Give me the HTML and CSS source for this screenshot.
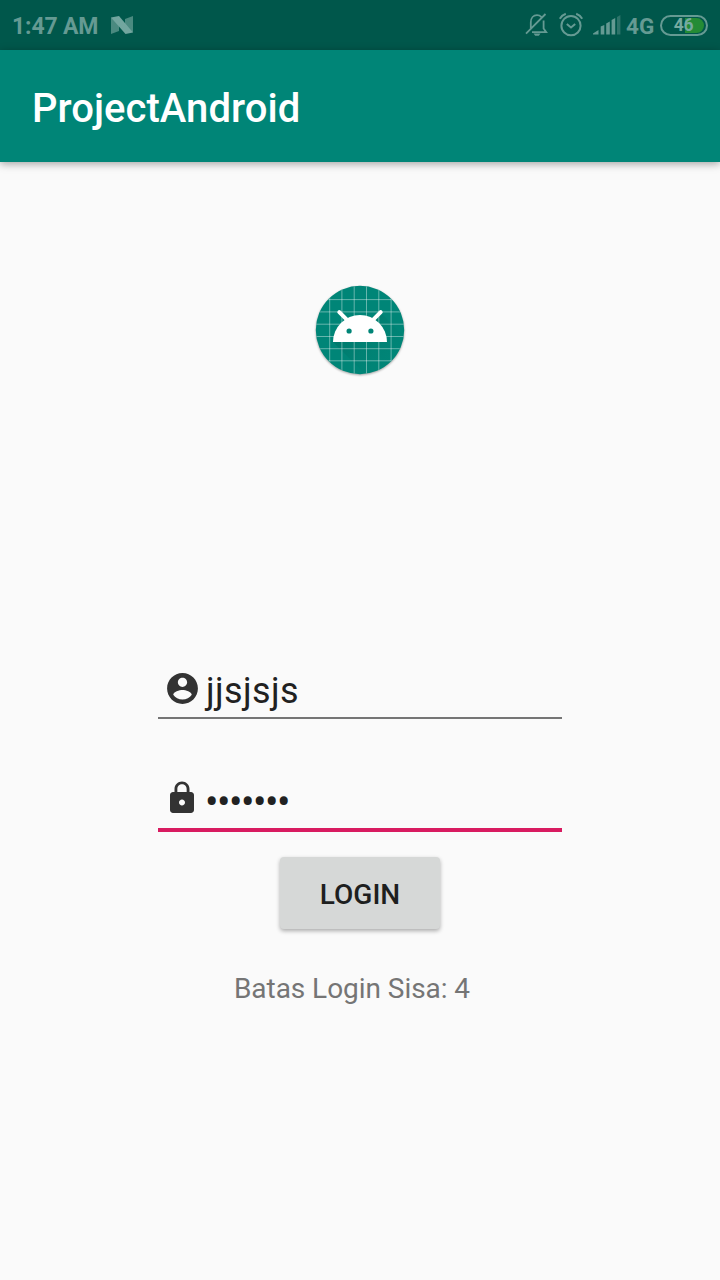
FILE: index.html
```html
<!DOCTYPE html>
<html lang="id">
<head>
<meta charset="utf-8">
<title>ProjectAndroid</title>
<link rel="stylesheet" href="styles.css">
</head>
<body>
<div class="status-bar">
  <span class="clock">1:47 AM</span>
  <svg class="nougat" width="24" height="20" viewBox="0 0 24 20">
    <path d="M1 2.500L9 7v9L1 19zM23 1v16.500l-8-4.500V4z" fill="#4a8a80"/>
    <path d="M1 2.500L9 1 23 17.500 15.500 19z" fill="#72a69f"/>
  </svg>
  <div class="indicators">
    <svg class="bell" width="24" height="26" viewBox="0 0 24 26" fill="none" stroke="#659a93" stroke-width="1.8">
      <path d="M5.800 16V10.500C5.800 6 8.500 3.200 12 3.200c1.700 0 3.200.6 4.300 1.700M18.600 8.500V16.500l2.600 3.600H7M1 21.600L20.500 2"/>
      <path d="M8.500 21.500h7l-1.700 2.300h-3.600z" fill="#659a93" stroke="none"/>
    </svg>
    <svg class="alarm" width="26" height="26" viewBox="0 0 26 26" fill="none" stroke="#659a93" stroke-width="2">
      <circle cx="13" cy="13.700" r="9.600"/>
      <path d="M8.800 12l4.200 3.500 4.200-3.500M1.800 6.800C3.200 4.500 5 2.800 7.800 1.800M24.200 6.800C22.800 4.500 21 2.800 18.200 1.800"/>
    </svg>
    <svg class="signal" width="28" height="22" viewBox="0 0 28 22" fill="#659a93">
      <path d="M0 20.500v-1l5.500-3.500v4.500zM7.700 12.500l3.600-1.500v9.500H7.700zM13.200 9.500l3.600-2v13h-3.600zM18.600 6l3.600-2v16.500h-3.600z"/>
      <path d="M24 3l3.400-2v19.500H24z" fill="#2d746a"/>
    </svg>
    <span class="network">4G</span>
    <div class="battery"><span class="charge"></span><span class="level">46</span></div>
  </div>
</div>
<header class="app-bar"><h1 class="title">ProjectAndroid</h1></header>
<main class="content">
  <svg class="logo" width="96" height="100" viewBox="312 282 96 100">
    <defs>
      <clipPath id="disc"><circle cx="360" cy="330" r="44"/></clipPath>
      <linearGradient id="fade" x1="340" y1="340" x2="380" y2="374" gradientUnits="userSpaceOnUse">
        <stop offset="0" stop-color="#00695c" stop-opacity=".38"/>
        <stop offset="1" stop-color="#00796b" stop-opacity="0"/>
      </linearGradient>
    </defs>
    <circle class="disc" cx="360" cy="330" r="44.200"/>
    <g clip-path="url(#disc)">
      <path d="M333 342l33 33h40v-37l-26-26z" fill="url(#fade)"/>
      <path class="grid" d="M329.700 284v92M341.900 284v92M354.200 284v92M366.500 284v92M378.800 284v92M391.100 284v92M314 299.600h92M314 311.900h92M314 324.200h92M314 336.500h92M314 348.700h92M314 360.800h92"/>
    </g>
    <path d="M333 342a27 27 0 0 1 54 0z" fill="#fff"/>
    <path d="M339.300 312.200l8 8M380.700 312.200l-8 8" stroke="#fff" stroke-width="4" stroke-linecap="round"/>
    <circle cx="349.100" cy="331" r="2.600" fill="#008577"/>
    <circle cx="370.900" cy="331" r="2.600" fill="#008577"/>
  </svg>
  <form class="login">
    <div class="field">
      <svg class="field-icon" width="37" height="37" viewBox="0 0 24 24"><path d="M12 2C6.480 2 2 6.480 2 12s4.480 10 10 10 10-4.480 10-10S17.520 2 12 2zm0 3c1.660 0 3 1.340 3 3s-1.340 3-3 3-3-1.340-3-3 1.340-3 3-3zm0 14.200c-2.500 0-4.710-1.280-6-3.220.03-1.990 4-3.080 6-3.080 1.990 0 5.970 1.090 6 3.080-1.290 1.940-3.500 3.220-6 3.220z"/></svg>
      <span class="value">jjsjsjs</span>
    </div>
    <div class="field focused">
      <svg class="field-icon" width="36" height="36" viewBox="0 0 24 24"><path d="M18 8h-1V6c0-2.760-2.240-5-5-5S7 3.240 7 6v2H6c-1.100 0-2 .9-2 2v10c0 1.100.9 2 2 2h12c1.100 0 2-.9 2-2V10c0-1.100-.9-2-2-2zm-6 9c-1.100 0-2-.9-2-2s.9-2 2-2 2 .9 2 2-.9 2-2 2zm3.100-9H8.900V6c0-1.710 1.390-3.100 3.100-3.100s3.100 1.390 3.100 3.100v2z"/></svg>
      <span class="value password">•••••••</span>
    </div>
    <button class="submit" type="button">LOGIN</button>
  </form>
  <p class="attempts">Batas Login Sisa: 4</p>
</main>
</body>
</html>
```
FILE: styles.css
```css
* { box-sizing: border-box; }
body {
  margin: 0;
  width: 720px;
  height: 1280px;
  overflow: hidden;
  background: #fafafa;
  font-family: Roboto, sans-serif;
  display: flex;
  flex-direction: column;
}
.status-bar {
  height: 50px;
  flex: none;
  display: flex;
  align-items: center;
  padding: 0 12px;
  background: #00574b;
  color: #659a93;
  font-size: 23px;
  font-weight: 700;
}
.status-bar svg { flex: none; }
.clock { width: 86px; margin-top: 2px; white-space: nowrap; letter-spacing: -.15px; }
.nougat { margin-left: 12px; }
.indicators { margin-left: auto; display: flex; align-items: center; }
.alarm { margin-left: 8.5px; }
.signal { margin: 0 5px 0 9.5px; }
.network { width: 29px; margin: 1px 5px 0 0; font-size: 22.5px; }
.battery {
  position: relative;
  width: 48px;
  height: 21px;
  border: 2px solid #659a93;
  border-radius: 11px;
  display: flex;
  justify-content: center;
  align-items: center;
}
.charge {
  position: absolute;
  top: 1px;
  right: 2px;
  bottom: 1px;
  width: 19px;
  border-radius: 0 8px 8px 0;
  background: #248b35;
}
.level { position: relative; font-size: 17.5px; line-height: 17px; margin: 1px 1px 0 0; color: #76aaa0; letter-spacing: -.4px; }
.app-bar {
  height: 112px;
  flex: none;
  display: flex;
  align-items: center;
  padding: 4px 32px 0;
  background: #008577;
  box-shadow: 0 2px 8px rgba(0, 0, 0, .35);
}
.title { margin: 0; color: #fff; font-size: 40px; font-weight: 500; letter-spacing: .05px; }
.content { display: flex; flex-direction: column; align-items: center; padding-top: 120px; }
.logo { display: block; }
.disc { fill: #008577; filter: drop-shadow(0 1px 1px rgba(0, 0, 0, .35)); }
.grid { fill: none; stroke: #fff; stroke-opacity: .4; stroke-width: 1; }
.login { width: 404px; display: flex; flex-direction: column; align-items: center; padding-top: 278px; }
.field {
  width: 100%;
  height: 59px;
  display: flex;
  align-items: center;
  padding: 3px 0 0 5.5px;
  border-bottom: 2px solid #757575;
}
.field-icon { flex: none; fill: #333; margin-bottom: 3px; }
.value { margin: 1px 0 0 5.5px; color: #212121; font-size: 36px; line-height: 44px; letter-spacing: .4px; }
.focused { height: 60px; margin-top: 53px; padding: 2px 0 0 6px; border-bottom: 4px solid #d81b60; }
.focused .field-icon { margin-bottom: 6px; }
.password { margin: 4px 0 0 5px; font-size: 40px; letter-spacing: -1.5px; }
.submit {
  width: 160px;
  height: 72px;
  margin-top: 25px;
  padding: 3px 0 0;
  border: 0;
  border-radius: 4px;
  background: #d6d8d7;
  color: #1e1f1f;
  font: 500 28px Roboto, sans-serif;
  box-shadow: 0 2px 4px rgba(0, 0, 0, .32);
}
.attempts { margin: 43px 16px 0 0; color: #757575; font-size: 28px; line-height: 33px; letter-spacing: -.05px; }
```
